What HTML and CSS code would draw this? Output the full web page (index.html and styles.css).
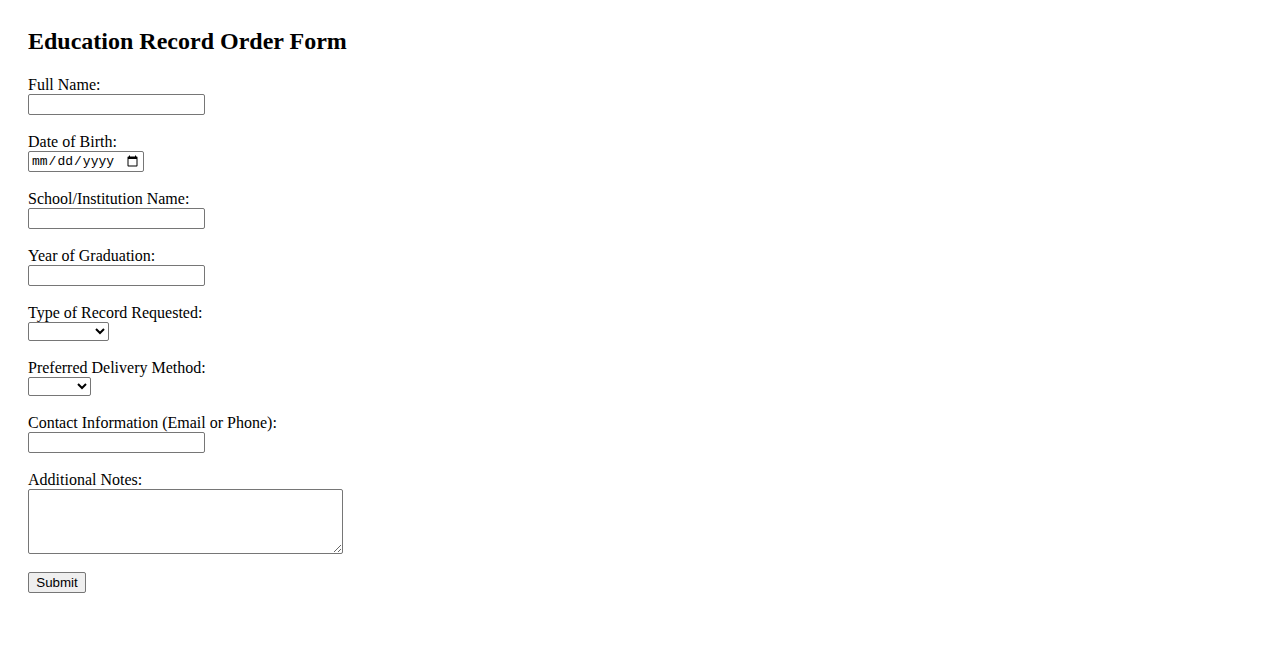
FILE: index.html
```html
<!DOCTYPE html>
<html>
<head>
<meta charset="utf-8">
<title>Education Record Order Form</title>
<link rel="stylesheet" href="styles.css">
</head>
<body>
<h2 class="title">Education Record Order Form</h2>
<form class="form">
<label for="name">Full Name:</label><br>
<input class="text" type="text" id="name"><br><br>
<label for="dob">Date of Birth:</label><br>
<input class="date" type="date" id="dob"><br><br>
<label for="school">School/Institution Name:</label><br>
<input class="text" type="text" id="school"><br><br>
<label for="year">Year of Graduation:</label><br>
<input class="text" type="text" id="year"><br><br>
<label for="type">Type of Record Requested:</label><br>
<select class="sel sel-type" id="type"><option></option></select><br><br>
<label for="delivery">Preferred Delivery Method:</label><br>
<select class="sel sel-del" id="delivery"><option></option></select><br><br>
<label for="contact">Contact Information (Email or Phone):</label><br>
<input class="text" type="text" id="contact"><br><br>
<label for="notes">Additional Notes:</label><br>
<textarea class="notes" id="notes"></textarea><br><br>
<input class="submit" type="submit" value="Submit">
</form>
</body>
</html>
```
FILE: styles.css
```css
body {
  margin: 8px;
  padding: 20px;
  font-family: "Liberation Serif", "Times New Roman", serif;
  font-size: 16px;
  color: #000;
  background: #fff;
}
.title {
  margin: 0 0 21px 0;
  font-size: 24px;
  font-weight: bold;
}
.form input, .form select, .form textarea {
  font-family: "Liberation Sans", Arial, sans-serif;
  font-size: 13.333px;
  box-sizing: border-box;
  border: 1px solid #767676;
  border-radius: 2px;
  background: #fff;
  margin: 0;
}
.form .text {
  width: 177px;
  height: 21px;
  padding: 1px 2px;
}
.form .date {
  width: 116px;
  height: 21px;
  padding: 1px 2px;
  font-family: "Liberation Mono", "DejaVu Sans Mono", monospace;
  font-size: 13px;
}
.form .sel {
  height: 19px;
}
.form .sel-type { width: 81px; }
.form .sel-del { width: 63px; }
.form .notes {
  width: 315px;
  height: 65px;
  vertical-align: bottom;
  resize: both;
}
.form .submit {
  width: 58px;
  height: 21px;
  background: #efefef;
  padding: 1px 6px;
}
```
